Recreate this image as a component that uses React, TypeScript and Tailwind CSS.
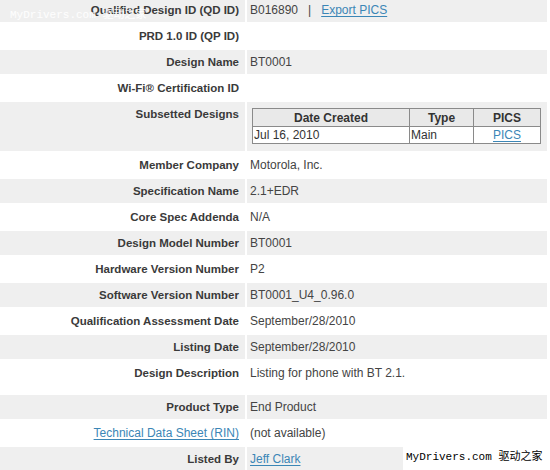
import React from "react";

type Row = {
  label: React.ReactNode;
  value: React.ReactNode;
  h?: string;
  link?: boolean;
};

const linkCls = "text-[#3b86b6] underline underline-offset-[2px]";

function SubTable() {
  return (
    <table className="mt-[1px] ml-[2px] w-[289px] border-collapse border border-[#555] text-[12px] leading-[16px] text-[#333]">
      <thead>
        <tr className="bg-[#e9e9e9]">
          <th className="w-[157px] border border-[#8a8a8a] font-bold text-center h-[18px] p-0">Date Created</th>
          <th className="w-[64px] border border-[#8a8a8a] font-bold text-center p-0">Type</th>
          <th className="border border-[#8a8a8a] font-bold text-center p-0">PICS</th>
        </tr>
      </thead>
      <tbody>
        <tr className="bg-white">
          <td className="border border-[#8a8a8a] pl-[1px] h-[17px] p-0">Jul 16, 2010</td>
          <td className="border border-[#8a8a8a] pl-[1px] p-0">Main</td>
          <td className="border border-[#8a8a8a] text-center p-0">
            <span className={linkCls}>PICS</span>
          </td>
        </tr>
      </tbody>
    </table>
  );
}

const rows: Row[] = [
  {
    label: "Qualified Design ID (QD ID)",
    value: (
      <span>
        B016890&nbsp;&nbsp;&nbsp;|&nbsp;&nbsp;&nbsp;<span className={linkCls}>Export PICS</span>
      </span>
    ),
  },
  { label: "PRD 1.0 ID (QP ID)", value: "" },
  { label: "Design Name", value: "BT0001" },
  { label: "Wi-Fi® Certification ID", value: "" },
  { label: "Subsetted Designs", value: <SubTable />, h: "h-[49px]" },
  { label: "Member Company", value: "Motorola, Inc." },
  { label: "Specification Name", value: "2.1+EDR" },
  { label: "Core Spec Addenda", value: "N/A" },
  { label: "Design Model Number", value: "BT0001" },
  { label: "Hardware Version Number", value: "P2" },
  { label: "Software Version Number", value: "BT0001_U4_0.96.0" },
  { label: "Qualification Assessment Date", value: "September/28/2010" },
  { label: "Listing Date", value: "September/28/2010" },
  { label: "Design Description", value: "Listing for phone with BT 2.1.", h: "h-[32px]" },
  { label: "Product Type", value: "End Product" },
  {
    label: <span className="font-normal text-[12px] text-[#3b86b6] underline underline-offset-[2px]">Technical Data Sheet (RIN)</span>,
    value: "(not available)",
  },
  { label: "Listed By", value: <span className={linkCls}>Jeff Clark</span> },
];

export default function App() {
  return (
    <div className="relative w-[550px] h-[470px] overflow-hidden bg-white font-['Liberation_Sans',Arial,sans-serif]">
      <div className="mt-[-2px] grid grid-cols-[245px_300px] gap-[2px]">
        {rows.map((r, i) => {
          const bg = i % 2 === 0 ? "bg-[#efefef]" : "bg-white";
          const h = r.h ?? "h-[24px]";
          return (
            <React.Fragment key={i}>
              <div
                className={`${bg} ${h} pt-[5px] pr-[6px] text-right text-[11.5px] leading-[14px] font-bold text-[#3a3a3a] whitespace-nowrap`}
              >
                {r.label}
              </div>
              <div className={`${bg} ${h} pt-[5px] pl-[3px] text-[12px] leading-[14px] text-[#444] whitespace-nowrap`}>
                {r.value}
              </div>
            </React.Fragment>
          );
        })}
      </div>
      <div className="absolute left-[10px] top-[9px] text-[11px] leading-[12px] text-white/90 font-['Liberation_Mono','Noto_Sans_CJK_SC',monospace] whitespace-nowrap">
        MyDrivers.com 驱动之家
      </div>
      <div className="absolute left-[403px] top-[447px] w-[147px] h-[23px] bg-white pl-[3px] pt-[4px] text-[11px] leading-[13px] text-black font-['Liberation_Mono','Noto_Sans_CJK_SC',monospace] whitespace-nowrap">
        MyDrivers.com 驱动之家
      </div>
    </div>
  );
}
